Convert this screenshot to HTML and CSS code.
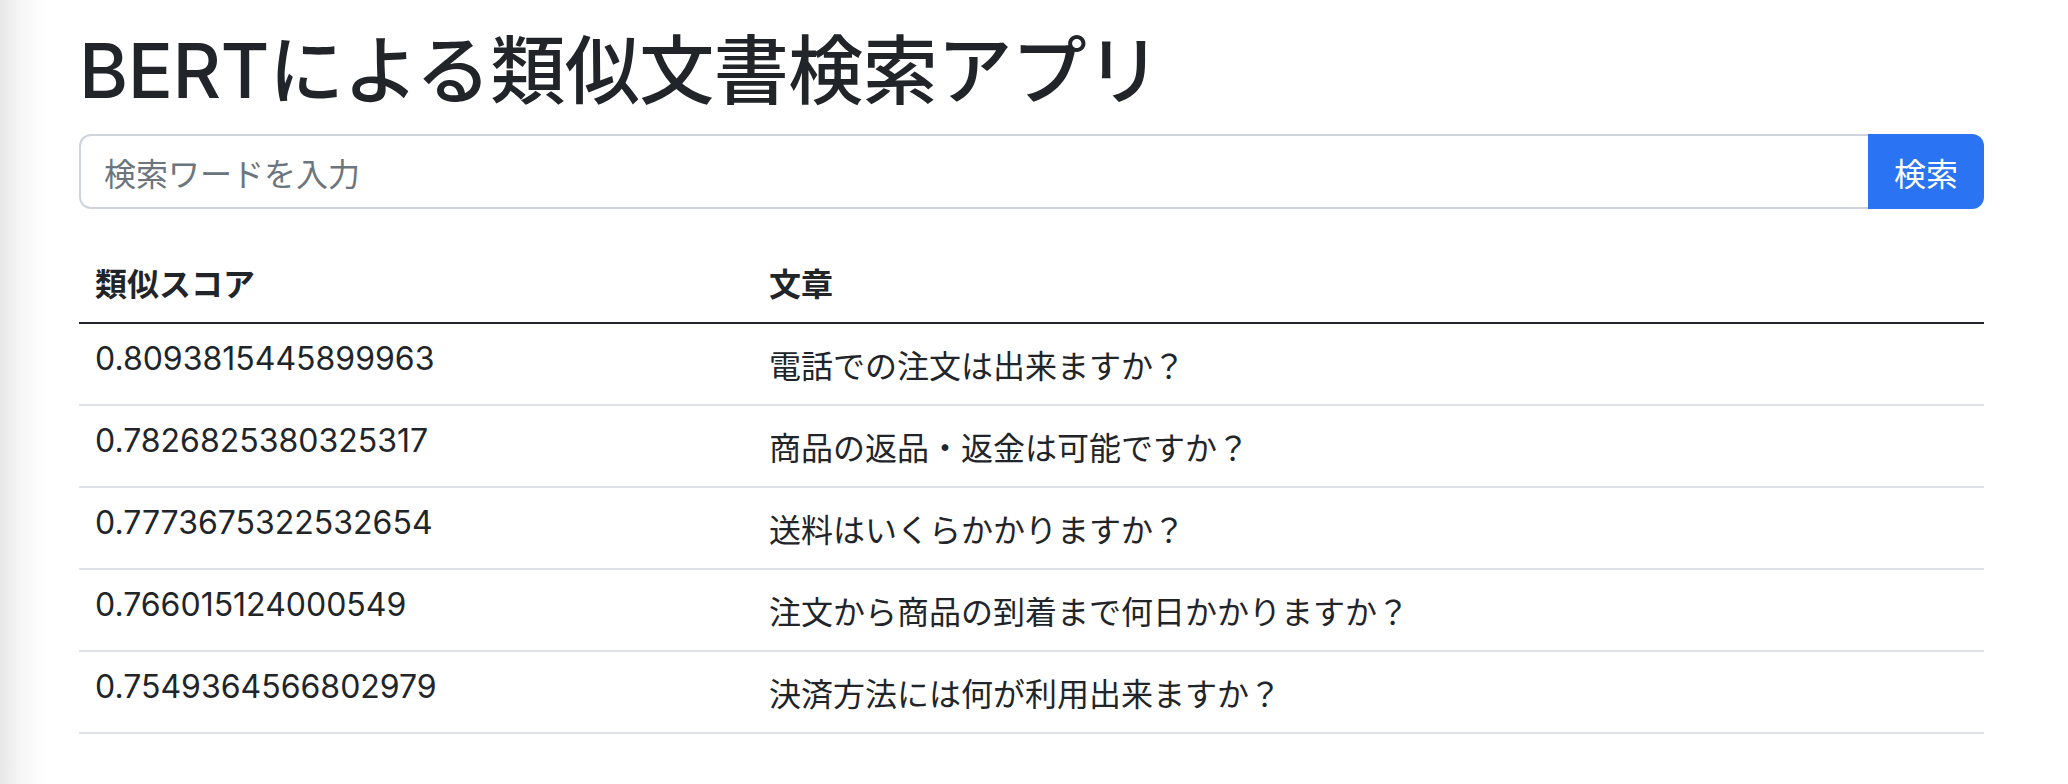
FILE: index.html
```html
<!DOCTYPE html>
<html lang="ja">
<head>
<meta charset="utf-8">
<title>BERTによる類似文書検索アプリ</title>
<link rel="stylesheet" href="styles.css">
</head>
<body>
<div class="container">
  <h1 class="title">BERTによる類似文書検索アプリ</h1>
  <form class="search">
    <input class="search-input" type="text" placeholder="検索ワードを入力">
    <button class="search-btn" type="button">検索</button>
  </form>
  <table class="results">
    <thead>
      <tr><th class="col-score">類似スコア</th><th>文章</th></tr>
    </thead>
    <tbody>
      <tr><td class="num">0.8093815445899963</td><td>電話での注文は出来ますか？</td></tr>
      <tr><td class="num">0.7826825380325317</td><td>商品の返品・返金は可能ですか？</td></tr>
      <tr><td class="num">0.7773675322532654</td><td>送料はいくらかかりますか？</td></tr>
      <tr><td class="num">0.766015124000549</td><td>注文から商品の到着まで何日かかりますか？</td></tr>
      <tr><td class="num">0.7549364566802979</td><td>決済方法には何が利用出来ますか？</td></tr>
    </tbody>
  </table>
</div>
</body>
</html>
```

FILE: styles.css
```css
* { box-sizing: border-box; }

html, body {
  margin: 0;
  height: 100%;
}

body {
  background: linear-gradient(to right, #e8e8e8 0px, #f6f6f6 22px, #ffffff 46px);
  color: #212529;
  font-family: Inter, "Noto Sans CJK JP", sans-serif;
  font-size: 32px;
  line-height: 48px;
}

.container {
  padding: 26px 84px 0 79px;
}

.title {
  margin: 0 0 18px 0;
  font-size: 75px;
  line-height: 90px;
  font-weight: 500;
  color: #212529;
  letter-spacing: -0.5px;
}

.search {
  display: flex;
  margin: 0;
  height: 75px;
}

.search-input {
  flex: 1;
  min-width: 0;
  height: 75px;
  border: 2px solid #ced4da;
  border-right: none;
  border-radius: 12px 0 0 12px;
  padding: 0 24px 0 23px;
  font-family: "Noto Sans CJK JP", sans-serif;
  font-size: 32px;
  color: #212529;
  background: #fff;
  outline: none;
}

.search-input::placeholder {
  color: #6c757d;
}

.search-btn {
  width: 116px;
  height: 75px;
  border: none;
  border-radius: 0 12px 12px 0;
  background: #2a73f2;
  color: #fff;
  font-family: "Noto Sans CJK JP", sans-serif;
  font-size: 32px;
  padding: 0;
  display: flex;
  align-items: center;
  justify-content: center;
}

.results {
  width: 100%;
  margin-top: 33px;
  border-collapse: collapse;
}

.results th,
.results td {
  padding: 16px 16px;
  text-align: left;
  vertical-align: top;
  line-height: 48px;
  font-family: "Noto Sans CJK JP", sans-serif;
}

.results th {
  font-weight: 700;
  border-bottom: 2px solid #212529;
}

.results td {
  border-bottom: 2px solid #dee2e6;
  font-weight: 400;
}

.results .col-score {
  width: 674px;
}

.results td.num {
  font-family: Inter, "Noto Sans CJK JP", sans-serif;
  position: relative;
  top: -5px;
}
```
